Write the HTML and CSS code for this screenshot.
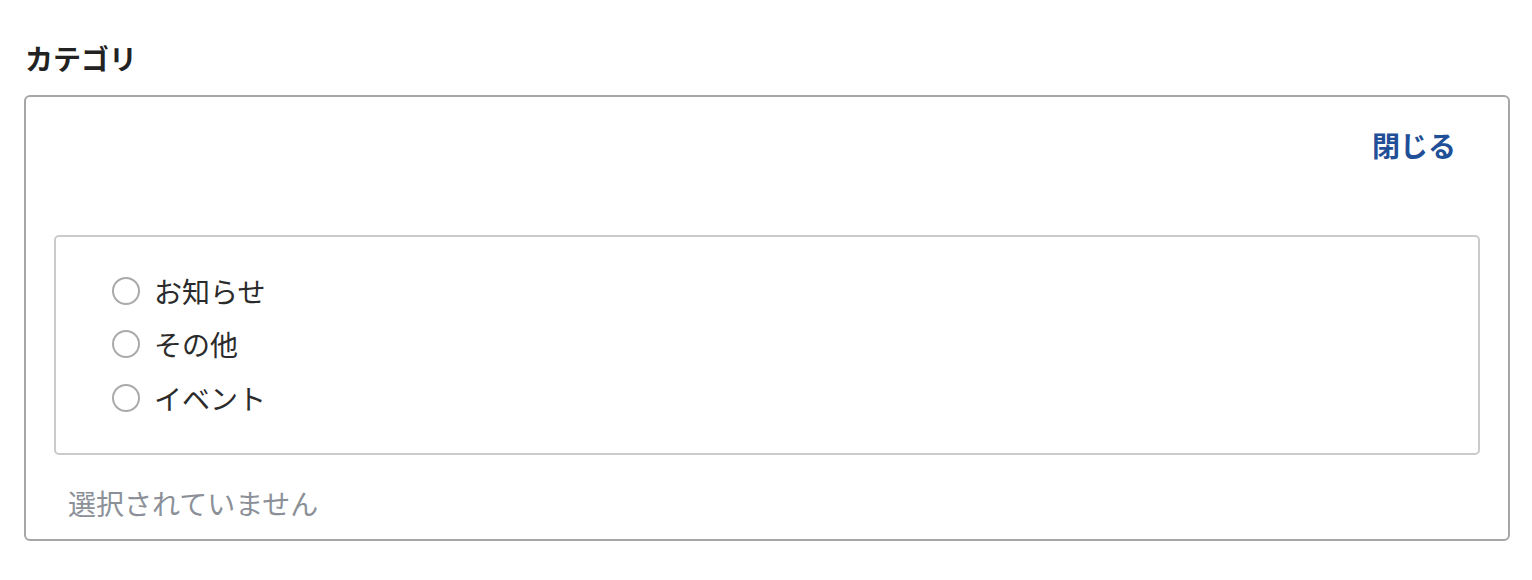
FILE: index.html
```html
<!DOCTYPE html>
<html>
<head>
<meta charset="utf-8">
<title>カテゴリ</title>
<link rel="stylesheet" href="styles.css">
</head>
<body>

<div class="field">
  <div class="field-label">カテゴリ</div>
  <div class="picker">
    <div class="picker-head">
      <a href="#" class="picker-close">閉じる</a>
    </div>
    <ul class="choices">
      <li><label><input type="radio" name="category" value="news"> お知らせ</label></li>
      <li><label><input type="radio" name="category" value="other"> その他</label></li>
      <li><label><input type="radio" name="category" value="event"> イベント</label></li>
    </ul>
    <p class="picker-status">選択されていません</p>
  </div>
</div>

</body>
</html>
```

FILE: styles.css
```css
body {margin:0; padding:37px 22px 0 24px; background:#fff; color:#333; font:28px/42px "Noto Sans CJK JP", "Noto Sans", sans-serif;}
/* field label */
.field-label {font-weight:bold; color:#222; margin:0 0 16px 1px;}
/* category picker */
.picker {border:2px solid #a6a6a6; border-radius:6px; padding:0 28px 15px;}
.picker-head {display:flex; justify-content:flex-end; padding:27px 24px 0 0; height:138px; box-sizing:border-box;}
.picker-close {color:#1f4f97; font-weight:bold; text-decoration:none;}
.choices {list-style:none; margin:0; padding:27px 0 28px 56px; border:2px solid #cbcbcb; border-radius:5px;}
.choices li {height:53.5px; display:flex; align-items:center;}
.choices label {display:flex; align-items:center; gap:14px; color:#2b2b2b; cursor:pointer;}
.choices input {appearance:none; -webkit-appearance:none; margin:0; width:28px; height:28px; border:2px solid #aaa; border-radius:50%; background:#fff;}
.choices input:checked {border-color:#1f4f97; box-shadow:inset 0 0 0 6px #fff; background:#1f4f97;}
.picker-status {margin:27px 0 0 14px; color:#8b9098;}
```
